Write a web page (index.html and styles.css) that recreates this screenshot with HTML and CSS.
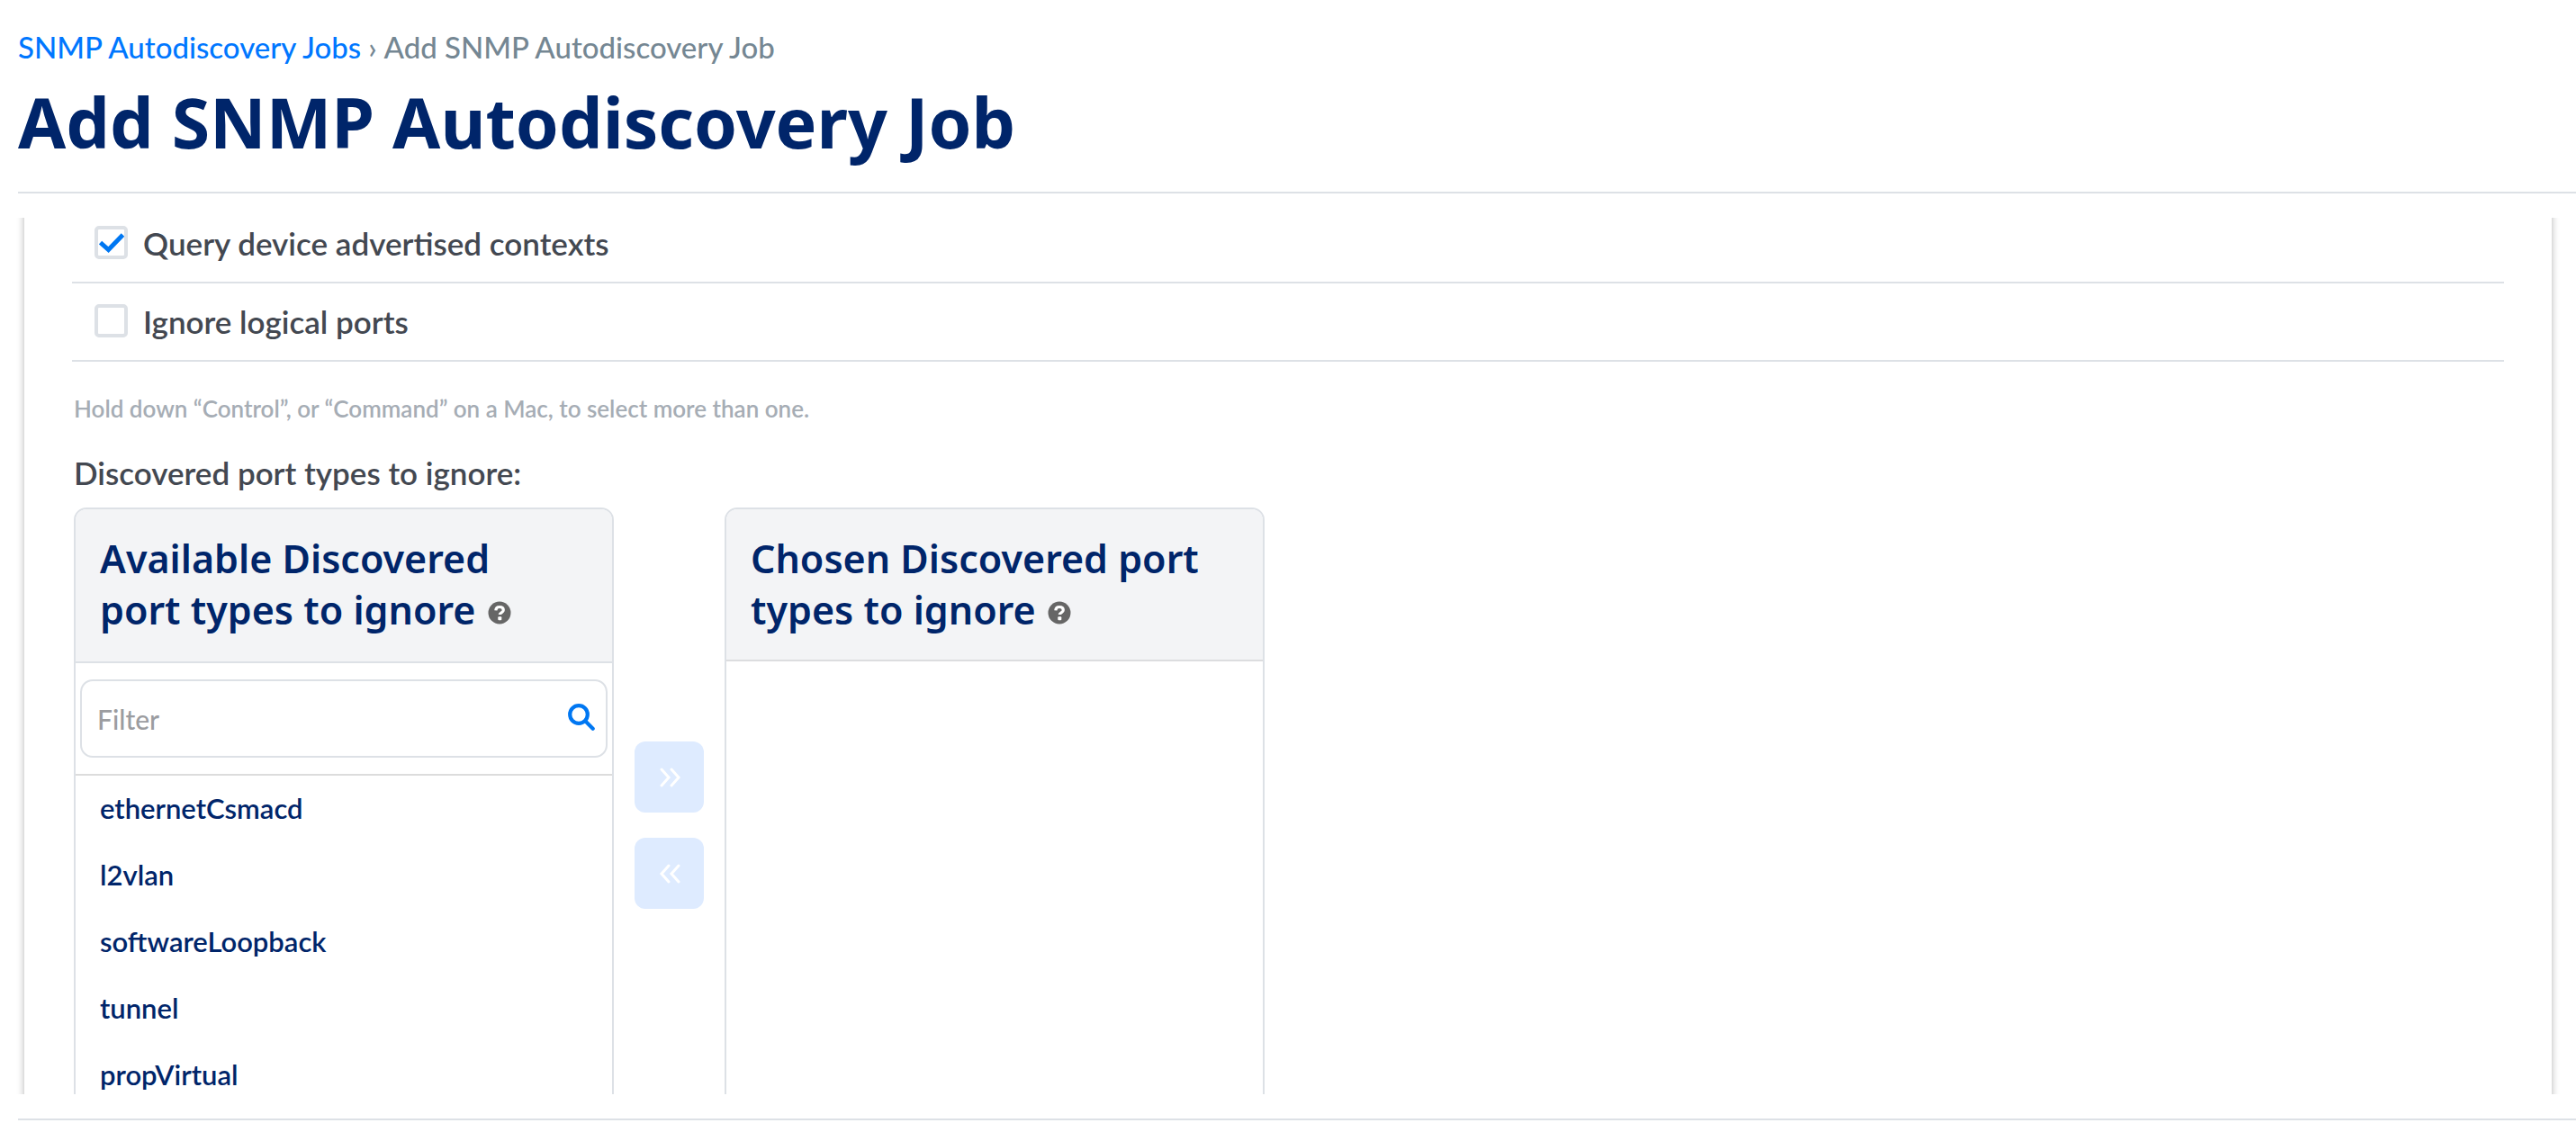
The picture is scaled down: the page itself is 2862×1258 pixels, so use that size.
FILE: index.html
```html
<!DOCTYPE html>
<html lang="en">
<head>
<meta charset="utf-8">
<meta name="viewport" content="width=device-width, initial-scale=1">
<title>Add SNMP Autodiscovery Job</title>
<link rel="stylesheet" href="styles.css">
</head>
<body>
<div class="page">
  <header class="page-header">
    <nav class="breadcrumb" aria-label="Breadcrumb">
      <a href="#">SNMP Autodiscovery Jobs</a>
      <span class="separator">›</span>
      <span class="current">Add SNMP Autodiscovery Job</span>
    </nav>
    <h1>Add SNMP Autodiscovery Job</h1>
  </header>

  <main class="scroll-area">
    <form class="panel">
      <div class="check-row">
        <span class="check-box">
          <input type="checkbox" id="query-contexts" checked>
          <svg class="tick" viewBox="0 0 28 22" aria-hidden="true"><path d="M1.500 10.500 10.500 18.500 26.500 2" fill="none" stroke="currentColor" stroke-width="5"/></svg>
        </span>
        <label for="query-contexts">Query device advertised contexts</label>
      </div>
      <div class="check-row">
        <span class="check-box">
          <input type="checkbox" id="ignore-logical">
          <svg class="tick" viewBox="0 0 28 22" aria-hidden="true"><path d="M1.500 10.500 10.500 18.500 26.500 2" fill="none" stroke="currentColor" stroke-width="5"/></svg>
        </span>
        <label for="ignore-logical">Ignore logical ports</label>
      </div>

      <div class="port-types">
        <p class="help">Hold down “Control”, or “Command” on a Mac, to select more than one.</p>
        <p class="field-label">Discovered port types to ignore:</p>
        <div class="selector">
          <section class="selector-box">
            <h2 class="filtered"><label for="available">Available Discovered port types to ignore</label>
              <svg class="help-icon" viewBox="0 0 26 26" aria-hidden="true"><circle cx="13" cy="13" r="12.500" fill="#666"/><path d="M8.800 10.300C9 7.700 11 6.500 13 6.500c2.500 0 4.300 1.300 4.300 3.400 0 3-4 2.700-4 5.200" fill="none" stroke="#fff" stroke-width="3.200"/><rect x="11.300" y="17.200" width="4" height="4" rx="1" fill="#fff"/></svg>
            </h2>
            <div class="filter">
              <input type="text" placeholder="Filter" aria-label="Filter">
              <svg class="search-icon" viewBox="0 0 30 30" aria-hidden="true"><circle cx="12" cy="12" r="9.800" fill="none" stroke="currentColor" stroke-width="4.200"/><path d="m19.500 19.500 8.200 8.200" stroke="currentColor" stroke-width="4.200" stroke-linecap="round"/></svg>
            </div>
            <select multiple id="available">
              <option>ethernetCsmacd</option>
              <option>l2vlan</option>
              <option>softwareLoopback</option>
              <option>tunnel</option>
              <option>propVirtual</option>
            </select>
          </section>
          <div class="transfer">
            <button type="button" aria-label="Choose"><svg viewBox="0 0 24 22" aria-hidden="true"><path d="m3 2 8 9-8 9M14 2l8 9-8 9"/></svg></button>
            <button type="button" aria-label="Remove"><svg viewBox="0 0 24 22" aria-hidden="true"><path d="m11 2-8 9 8 9M22 2l-8 9 8 9"/></svg></button>
          </div>
          <section class="selector-box">
            <h2><label for="chosen">Chosen Discovered port types to ignore</label>
              <svg class="help-icon" viewBox="0 0 26 26" aria-hidden="true"><circle cx="13" cy="13" r="12.500" fill="#666"/><path d="M8.800 10.300C9 7.700 11 6.500 13 6.500c2.500 0 4.300 1.300 4.300 3.400 0 3-4 2.700-4 5.200" fill="none" stroke="#fff" stroke-width="3.200"/><rect x="11.300" y="17.200" width="4" height="4" rx="1" fill="#fff"/></svg>
            </h2>
            <select multiple id="chosen"></select>
          </section>
        </div>
      </div>
    </form>
  </main>

  <footer class="page-footer"></footer>
</div>
</body>
</html>
```
FILE: styles.css
```css
:root {
  --navy: #00256a;
  --blue: #0077f2;
  --line: #dde1e6;
  --text: #434851;
}

* { box-sizing: border-box; }

body {
  margin: 0;
  background: #fff;
  color: var(--text);
  font-family: Lato, "Liberation Sans", sans-serif;
  font-weight: 600;
}

h1, h2, p { margin: 0; }

h1, h2 {
  color: var(--navy);
  font-family: "Noto Sans", "Open Sans", sans-serif;
}

.page {
  display: flex;
  flex-direction: column;
  height: 100vh;
}

/* Header */
.page-header {
  margin-left: 20px;
  padding: 32px 0 31px;
  border-bottom: 2px solid var(--line);
}

.breadcrumb {
  display: flex;
  gap: 8px;
  font-size: 33px;
  font-weight: 500;
  line-height: 40px;
}

.breadcrumb a {
  color: #0077ff;
  text-decoration: none;
}

.separator, .current { color: #758793; }

h1 {
  margin-top: 18px;
  font-size: 77px;
  font-weight: 700;
  line-height: 92px;
}

/* Scrolling form */
.scroll-area {
  flex: 1;
  min-height: 0;
  margin: 27px 0;
  overflow: hidden;
}

/* The form is scrolled slightly under the header */
.panel {
  margin: -14px 27px 0;
  padding: 0 53px;
  box-shadow: 0 0 8px rgba(0, 0, 0, 0.3);
}

.check-row {
  display: flex;
  align-items: center;
  gap: 17px;
  height: 87px;
  padding: 0 25px 2px;
  border-bottom: 2px solid var(--line);
  font-size: 35px;
  line-height: 42px;
}

.check-box {
  display: grid;
  place-items: center;
}

.check-box > * { grid-area: 1 / 1; }

.check-box input {
  appearance: none;
  width: 37px;
  height: 37px;
  margin: 0;
  border: 4px solid var(--line);
  border-radius: 5px;
  background: #fff;
}

.tick {
  width: 28px;
  height: 22px;
  color: var(--blue);
  visibility: hidden;
  pointer-events: none;
}

input:checked + .tick { visibility: visible; }

.port-types { padding: 34px 2px; }

.help {
  color: #a6adb5;
  font-size: 26px;
  line-height: 36px;
}

.field-label {
  margin: 32px 0 18px;
  font-size: 35px;
  line-height: 42px;
}

/* Dual list selector */
.selector {
  display: flex;
  gap: 23px;
}

.selector-box {
  width: 600px;
  border: 2px solid var(--line);
  border-radius: 14px;
  overflow: hidden;
}

h2 {
  padding: 26px 50px 27px 27px;
  border-bottom: 2px solid #dcdddf;
  background: #f3f4f6;
  font-size: 43px;
  font-weight: 600;
  line-height: 57px;
}

h2.filtered {
  padding-bottom: 29px;
  border-color: var(--line);
}

.help-icon {
  width: 26px;
  height: 26px;
  margin-left: 2px;
}

.filter {
  display: grid;
  align-items: center;
  padding: 18px 5px;
  border-bottom: 2px solid #dcdcdc;
}

.filter > * { grid-area: 1 / 1; }

.filter input {
  width: 100%;
  height: 87px;
  padding: 0 17px;
  border: 2px solid var(--line);
  border-radius: 14px;
  background: #fff;
  color: var(--text);
  font: inherit;
  font-size: 30px;
  font-weight: 500;
}

.filter input::placeholder {
  color: #9b9ca0;
  opacity: 1;
}

.search-icon {
  justify-self: end;
  width: 30px;
  height: 30px;
  margin: 0 14px 4px 0;
  color: var(--blue);
}

select {
  appearance: none;
  display: block;
  width: 100%;
  height: 600px;
  padding: 0;
  border: 0;
  background: #fff;
  color: var(--navy);
  font: inherit;
  font-size: 31px;
  overflow: hidden;
}

option {
  display: flex;
  align-items: center;
  height: 74px;
  padding: 0 27px 2px;
  color: var(--navy);
  font-weight: 600;
}

.transfer {
  display: flex;
  flex-direction: column;
  gap: 28px;
  padding-top: 260px;
}

.transfer button {
  display: grid;
  place-items: center;
  width: 77px;
  height: 79px;
  padding: 0;
  border: 0;
  border-radius: 12px;
  background: #deebff;
}

.transfer svg {
  width: 24px;
  height: 22px;
  fill: none;
  stroke: #fff;
  stroke-width: 3;
  stroke-linecap: round;
}

.page-footer {
  height: 15px;
  margin-left: 20px;
  border-top: 2px solid var(--line);
}
```
